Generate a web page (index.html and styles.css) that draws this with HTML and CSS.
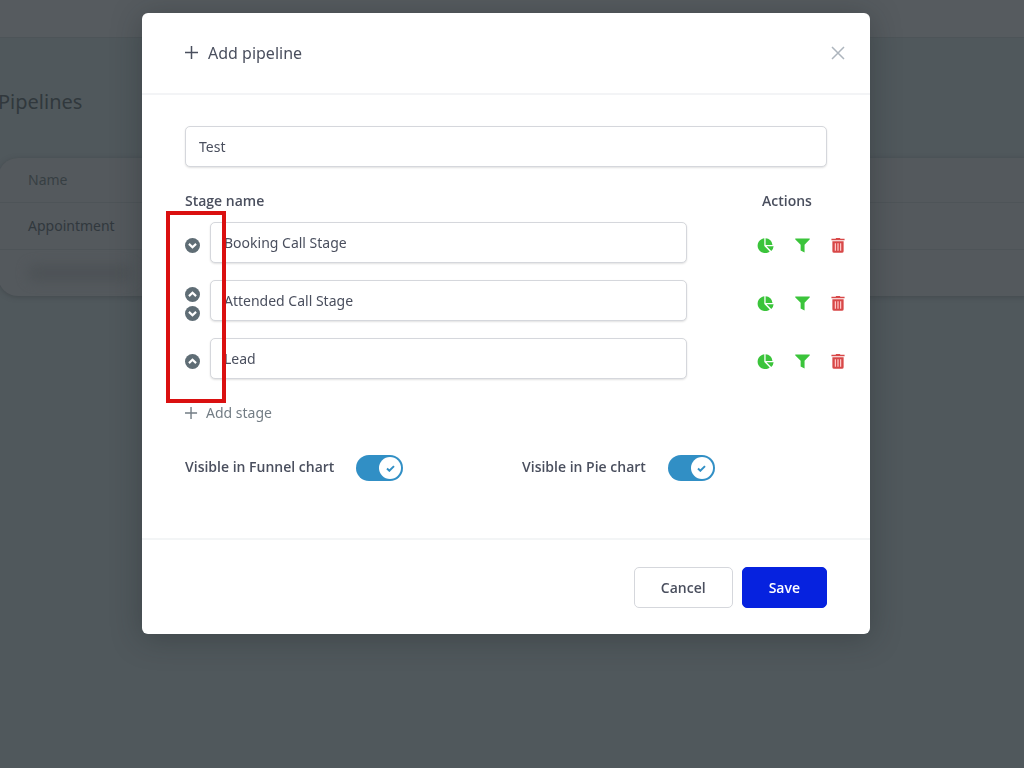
FILE: index.html
```html
<!DOCTYPE html>
<html lang="en">
<head>
<meta charset="utf-8">
<title>Pipelines</title>
<link rel="stylesheet" href="styles.css">
</head>
<body>
<svg class="sprite" aria-hidden="true">
  <symbol id="plus" viewBox="0 0 14 14"><path d="M6.500 0v13M0 6.500h13" fill="none" stroke="currentColor" stroke-width="1.500"/></symbol>
  <symbol id="down" viewBox="0 0 16 16"><circle cx="8" cy="8" r="8" fill="currentColor"/><path d="M4.200 6.300 8 9.800l3.800-3.500" fill="none" stroke="#fff" stroke-width="2.300"/></symbol>
  <symbol id="up" viewBox="0 0 16 16"><circle cx="8" cy="8" r="8" fill="currentColor"/><path d="M4.200 9.700 8 6.200l3.800 3.500" fill="none" stroke="#fff" stroke-width="2.300"/></symbol>
  <symbol id="pie" viewBox="0 0 17 16"><path d="M7.300.3v7.600l5.400 5.500A7.400 7.400 0 1 1 7.300.3z" fill="currentColor"/><path d="M8.600.3a6.900 6.900 0 0 1 6.900 6.600H8.600zM9.600 8.300h7a7 7 0 0 1-2.300 4.800z" fill="currentColor"/></symbol>
  <symbol id="funnel" viewBox="0 0 16 16"><path d="M.8.500h14.400c.6 0 .8.600.4 1L10.200 7.200v8.300L6 13.300V7.200L.4 1.500C0 1.100.2.500.8.500z" fill="currentColor"/></symbol>
  <symbol id="trash" viewBox="0 0 14 16"><path d="M5 0h4l.6.800H14v1.700H0V.8h4.400z" fill="currentColor"/><path d="M1 3.500h12V14a1.800 1.800 0 0 1-1.800 1.800H2.800A1.800 1.800 0 0 1 1 14z" fill="currentColor"/><path d="M4.200 5.500v8M7 5.500v8M9.800 5.500v8" stroke="#ffc9c9" stroke-width="1.300"/></symbol>
</svg>

<div class="page">
  <header class="topbar"></header>
  <main class="content">
    <h1 class="page-title">Pipelines</h1>
    <div class="card">
      <div class="card-row card-head">Name</div>
      <div class="card-row">Appointment</div>
      <div class="card-row"><span class="redacted"></span></div>
    </div>
  </main>
</div>

<div class="overlay">
  <form class="modal" role="dialog" aria-labelledby="modal-title">
    <div class="modal-head">
      <h2 class="modal-title" id="modal-title"><svg class="icon-plus"><use href="#plus"/></svg>Add pipeline</h2>
      <button class="icon-btn close" type="button" aria-label="Close"><svg class="icon-close" viewBox="0 0 14 14"><path d="m1 1 12 12M13 1 1 13" fill="none" stroke="currentColor" stroke-width="1.500"/></svg></button>
    </div>

    <div class="modal-body">
      <div class="name-field"><input class="field" type="text" value="Test" aria-label="Pipeline name"></div>

      <div class="stages">
        <table class="stage-table">
          <colgroup><col class="col-move"><col><col class="col-actions"></colgroup>
          <thead><tr><th colspan="2" scope="col">Stage name</th><th class="actions-head" scope="col">Actions</th></tr></thead>
          <tbody>
            <tr>
              <td class="move-cell"><div class="move"><button class="icon-btn" type="button" aria-label="Move down"><svg class="icon"><use href="#down"/></svg></button></div></td>
              <td class="field-cell"><input class="field" type="text" value="Booking Call Stage" aria-label="Stage 1 name"></td>
              <td class="actions-cell"><div class="actions">
                <button class="icon-btn green" type="button" aria-label="Pie chart"><svg class="icon-pie"><use href="#pie"/></svg></button>
                <button class="icon-btn green" type="button" aria-label="Funnel chart"><svg class="icon"><use href="#funnel"/></svg></button>
                <button class="icon-btn red" type="button" aria-label="Delete"><svg class="icon-trash"><use href="#trash"/></svg></button>
              </div></td>
            </tr>
            <tr>
              <td class="move-cell"><div class="move"><button class="icon-btn" type="button" aria-label="Move up"><svg class="icon"><use href="#up"/></svg></button><button class="icon-btn" type="button" aria-label="Move down"><svg class="icon"><use href="#down"/></svg></button></div></td>
              <td class="field-cell"><input class="field" type="text" value="Attended Call Stage" aria-label="Stage 2 name"></td>
              <td class="actions-cell"><div class="actions">
                <button class="icon-btn green" type="button" aria-label="Pie chart"><svg class="icon-pie"><use href="#pie"/></svg></button>
                <button class="icon-btn green" type="button" aria-label="Funnel chart"><svg class="icon"><use href="#funnel"/></svg></button>
                <button class="icon-btn red" type="button" aria-label="Delete"><svg class="icon-trash"><use href="#trash"/></svg></button>
              </div></td>
            </tr>
            <tr>
              <td class="move-cell"><div class="move"><button class="icon-btn" type="button" aria-label="Move up"><svg class="icon"><use href="#up"/></svg></button></div></td>
              <td class="field-cell"><input class="field" type="text" value="Lead" aria-label="Stage 3 name"></td>
              <td class="actions-cell"><div class="actions">
                <button class="icon-btn green" type="button" aria-label="Pie chart"><svg class="icon-pie"><use href="#pie"/></svg></button>
                <button class="icon-btn green" type="button" aria-label="Funnel chart"><svg class="icon"><use href="#funnel"/></svg></button>
                <button class="icon-btn red" type="button" aria-label="Delete"><svg class="icon-trash"><use href="#trash"/></svg></button>
              </div></td>
            </tr>
          </tbody>
        </table>
        <div class="highlight"></div>
      </div>

      <button class="add-stage" type="button"><svg class="icon-plus"><use href="#plus"/></svg>Add stage</button>

      <div class="toggles">
        <label class="toggle">Visible in Funnel chart
          <span class="switch"><input class="switch-input" type="checkbox" checked><span class="knob"><svg class="icon-check" viewBox="0 0 10 8"><path d="m1 4 2.700 2.600L9 1.200" fill="none" stroke="currentColor" stroke-width="2.200"/></svg></span></span>
        </label>
        <label class="toggle">Visible in Pie chart
          <span class="switch"><input class="switch-input" type="checkbox" checked><span class="knob"><svg class="icon-check" viewBox="0 0 10 8"><path d="m1 4 2.700 2.600L9 1.200" fill="none" stroke="currentColor" stroke-width="2.200"/></svg></span></span>
        </label>
      </div>
    </div>

    <div class="modal-foot">
      <button class="btn" type="button">Cancel</button>
      <button class="btn btn-primary" type="submit">Save</button>
    </div>
  </form>
</div>
</body>
</html>
```

FILE: styles.css
```css
*, *::before, *::after { box-sizing: border-box; }
body {
  margin: 0;
  min-height: 100vh;
  overflow: hidden;
  background: #50585c;
  color: #4a4f5e;
  font: 14px/20px "Noto Sans", "Open Sans", sans-serif;
}
button, input { font: inherit; color: inherit; }
svg { display: block; }
.sprite { display: none; }

/* Dimmed page */
.topbar { height: 38px; background: #565b5f; border-bottom: 1px solid #4d5458; }
.content { margin: 0 -20px 0 -2px; padding-top: 50px; color: #31383d; }
.page-title { margin: 0 0 42px; font-size: 20px; line-height: 28px; font-weight: 400; }
.card {
  background: #54595d;
  border-radius: 20px;
  box-shadow: 0 1px 5px #43494d;
  overflow: hidden;
}
.card-row { display: flex; align-items: center; height: 47px; padding: 0 30px; border-top: 1px solid #4e5458; }
.card-head { height: 44px; border-top: 0; color: #373f43; }
.redacted { width: 104px; height: 16px; border-radius: 8px; background: #4d5256; filter: blur(6px); }

/* Modal */
.overlay { position: fixed; inset: 0; padding: 13px 12px 13px 0; overflow: auto; }
.modal {
  max-width: 728px;
  margin: 0 auto;
  background: #fff;
  border-radius: 6px;
  box-shadow: 0 4px 30px rgba(30, 35, 38, .35);
}
.modal-head {
  display: flex;
  align-items: center;
  justify-content: space-between;
  height: 82px;
  padding: 0 25px 0 43px;
  border-bottom: 2px solid #f3f4f6;
}
.modal-title { display: flex; align-items: center; gap: 9px; margin: 0; font-size: 16px; line-height: 24px; font-weight: 400; }
.icon-plus { width: 14px; height: 14px; }
.icon-close { width: 14px; height: 14px; }
.icon-btn { display: block; padding: 0; border: 0; background: none; }
.close { color: #adb5bd; }

.modal-body { padding: 31px 25px 57px 43px; }
.name-field { margin-right: 18px; }
.field {
  display: block;
  width: 100%;
  height: 41px;
  padding: 0 13px;
  border: 1px solid #d5d7dc;
  border-radius: 5px;
  background: #fff;
  box-shadow: 0 1px 2px rgba(0, 0, 0, .12);
  outline: 0;
}
.stages { position: relative; margin-top: 24px; }
.stage-table { width: 100%; table-layout: fixed; border-collapse: collapse; }
.col-move { width: 25px; }
.col-actions { width: 158px; }
.stage-table th { padding: 0 0 11px; text-align: left; font-family: "Open Sans", sans-serif; font-weight: 600; }
.stage-table .actions-head { padding-left: 75px; }
.stage-table td { padding: 0; }
.stage-table .field-cell { padding-bottom: 17px; }
.stage-table .move-cell { padding-bottom: 11px; }
.stage-table .actions-cell { padding: 0 0 11px 70px; }
.move { display: grid; gap: 4px; color: #5f6d75; }
.icon { width: 15px; height: 15px; }
.icon-pie { width: 17px; height: 16px; }
.icon-trash { width: 14px; height: 15px; }
.actions { display: flex; align-items: center; justify-content: space-between; }
.green { color: #3bc43b; }
.red { color: #d84848; }
.highlight {
  position: absolute;
  top: 20px;
  left: -19px;
  width: 60px;
  height: 192px;
  border: 4px solid #da1010;
  pointer-events: none;
}
.add-stage {
  display: flex;
  align-items: center;
  gap: 8px;
  margin-top: 7px;
  padding: 0;
  border: 0;
  background: none;
  color: #737d85;
}
.add-stage .icon-plus { width: 13px; height: 13px; }

.toggles { display: grid; grid-template-columns: 1fr 1fr; gap: 32px; margin: 32px 18px 0 0; }
.toggle { display: flex; gap: 22px; font-family: "Open Sans", sans-serif; line-height: 24px; font-weight: 600; }
.switch { position: relative; width: 47px; height: 26px; }
.switch-input { appearance: none; display: block; width: 100%; height: 100%; margin: 0; border-radius: 13px; background: #318fc5; }
.knob {
  position: absolute;
  top: 2px;
  right: 2px;
  display: grid;
  place-items: center;
  width: 22px;
  height: 22px;
  border-radius: 50%;
  background: #fff;
  color: #318fc5;
}
.icon-check { width: 9px; height: 7px; }

.modal-foot {
  display: flex;
  justify-content: flex-end;
  gap: 9px;
  padding: 27px 43px 26px;
  border-top: 2px solid #f3f5f6;
}
.btn {
  height: 41px;
  padding: 0 26px;
  border: 1px solid #d5d7dc;
  border-radius: 5px;
  background: #fff;
  font-family: "Open Sans", sans-serif;
  font-weight: 600;
}
.btn-primary { border-color: #0622df; background: #0622df; color: #fff; }
```
